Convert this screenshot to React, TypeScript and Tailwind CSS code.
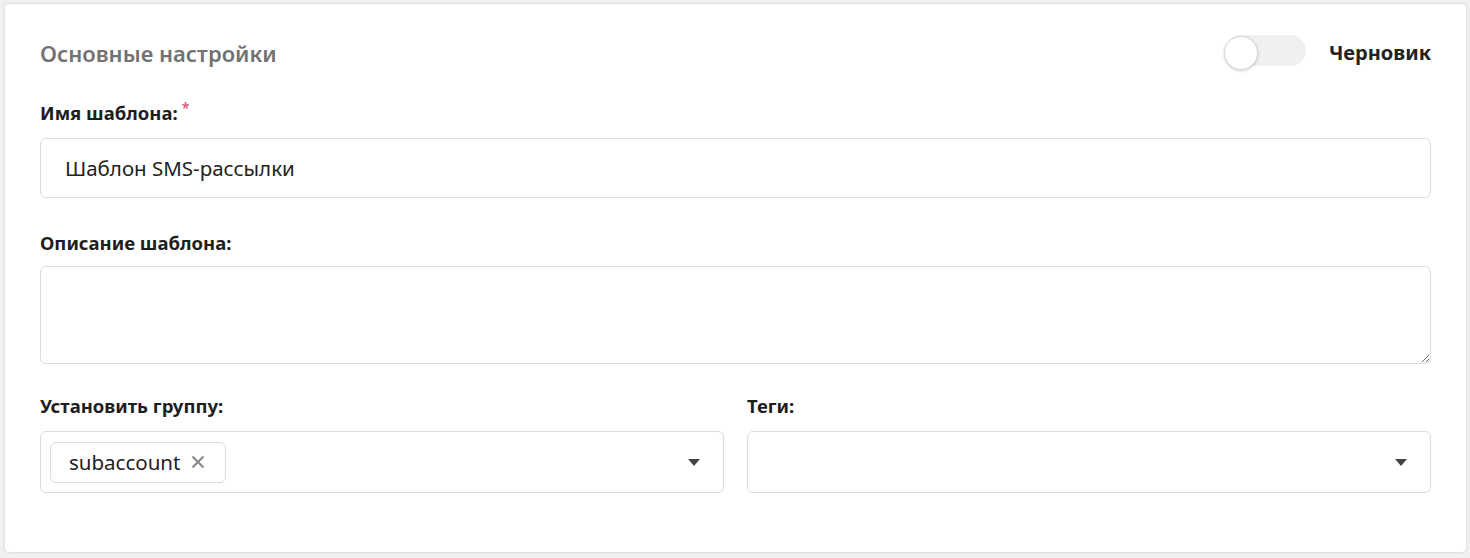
import React from "react";

function Caret() {
  return (
    <svg width="12" height="7" viewBox="0 0 12 7" className="shrink-0">
      <path d="M0 0 L12 0 L6 7 Z" fill="#444" />
    </svg>
  );
}

export default function App() {
  return (
    <div
      className="w-[1470px] h-[558px] bg-[#f1f1f1] pt-[4px] pl-[5px] pr-[4px]"
      style={{ fontFamily: '"Noto Sans", "Open Sans", sans-serif' }}
    >
      <div className="h-[548px] bg-white rounded-[4px] shadow-[0_0_3px_rgba(0,0,0,0.18)] px-[35px] pt-[32px]">
        {/* header */}
        <div className="flex items-center justify-between h-[34px]">
          <div className="text-[22px] font-semibold text-[#727272] leading-none">Основные настройки</div>
          <div className="flex items-center gap-[23px]">
            <div className="relative w-[82px] h-[36px]">
              <div className="absolute left-[2px] right-0 top-0 h-[31px] rounded-full bg-[#f0f0f0]" />
              <div className="absolute left-0 top-[1px] w-[34px] h-[34px] rounded-full bg-white border border-[#d6d6d6] shadow-[0_1px_3px_rgba(0,0,0,0.18)]" />
            </div>
            <div className="text-[20px] font-bold text-[#222] leading-none">Черновик</div>
          </div>
        </div>

        {/* name */}
        <div className="mt-[31px] h-[24px] flex items-center text-[18.5px] font-bold text-[#1e1e1e]">
          Имя шаблона:<span className="text-[14px] text-[#d8668a] ml-[4px] self-start -mt-[4px]">*</span>
        </div>
        <div className="mt-[13px] h-[60px] border border-[#dcdcdc] rounded-[6px] flex items-center pl-[24px] text-[20.5px] text-[#222]">
          Шаблон SMS-рассылки
        </div>

        {/* description */}
        <div className="mt-[33px] h-[24px] flex items-center text-[18.5px] font-bold text-[#1e1e1e]">
          Описание шаблона:
        </div>
        <textarea
          className="mt-[11px] block w-full h-[98px] border border-[#dcdcdc] rounded-[6px] outline-none"
          defaultValue=""
        />

        {/* group + tags */}
        <div className="mt-[30px] grid grid-cols-[684px_1fr] gap-[23px]">
          <div>
            <div className="h-[24px] flex items-center text-[18.5px] font-bold text-[#1e1e1e]">Установить группу:</div>
            <div className="mt-[13px] h-[62px] border border-[#dcdcdc] rounded-[6px] flex items-center pl-[9px] pr-[23px]">
              <div className="h-[41px] border border-[#dcdcdc] rounded-[6px] flex items-center pl-[18px] pr-[20px] gap-[11px]">
                <span className="text-[20.5px] text-[#222]">subaccount</span>
                <svg width="14" height="14" viewBox="0 0 14 14">
                  <path d="M1.5 1.5 L12.5 12.5 M12.5 1.5 L1.5 12.5" stroke="#8a8a8a" strokeWidth="2.2" />
                </svg>
              </div>
              <div className="flex-1" />
              <Caret />
            </div>
          </div>
          <div>
            <div className="h-[24px] flex items-center text-[18.5px] font-bold text-[#1e1e1e]">Теги:</div>
            <div className="mt-[13px] h-[62px] border border-[#dcdcdc] rounded-[6px] flex items-center justify-end pr-[23px]">
              <Caret />
            </div>
          </div>
        </div>
      </div>
    </div>
  );
}
